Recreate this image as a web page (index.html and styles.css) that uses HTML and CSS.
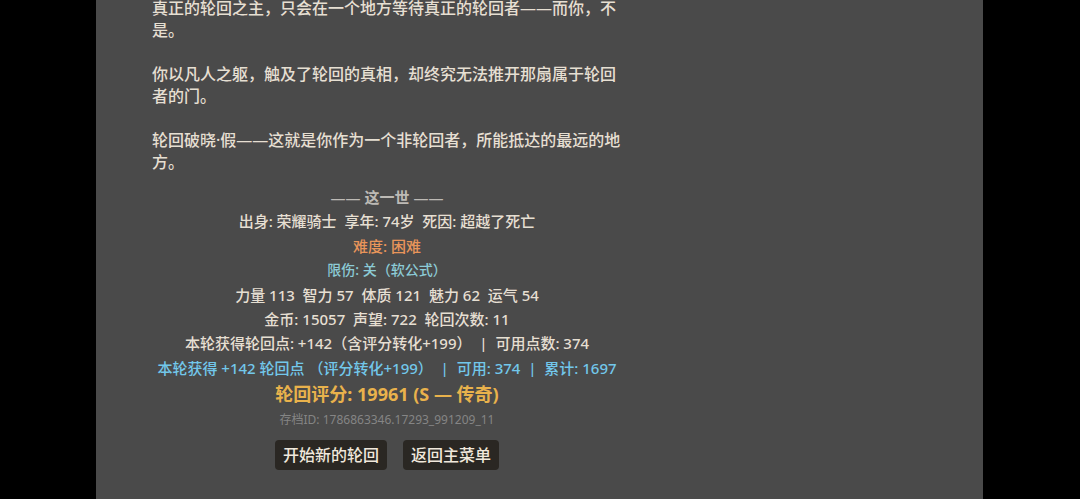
FILE: index.html
```html
<!DOCTYPE html>
<html lang="zh-CN">
<head>
    <meta charset="UTF-8">
    <meta name="viewport" content="width=device-width, initial-scale=1.0">
    <title>轮回 - 结局</title>
    <link rel="stylesheet" href="styles.css">
</head>
<body>

    <div class="screen">
        <div class="ending">
            <div class="story">
                <p>真正的轮回之主，只会在一个地方等待真正的轮回者——而你，不是。</p>
                <p>你以凡人之躯，触及了轮回的真相，却终究无法推开那扇属于轮回者的门。</p>
                <p>轮回破晓·假——这就是你作为一个非轮回者，所能抵达的最远的地方。</p>
            </div>

            <div class="summary">
                <div class="row title">—— 这一世 ——</div>
                <div class="row">出身: 荣耀骑士&nbsp;&nbsp;享年: 74岁&nbsp;&nbsp;死因: 超越了死亡</div>
                <div class="row difficulty">难度: 困难</div>
                <div class="row cap">限伤: 关（软公式）</div>
                <div class="row">力量 113&nbsp;&nbsp;智力 57&nbsp;&nbsp;体质 121&nbsp;&nbsp;魅力 62&nbsp;&nbsp;运气 54</div>
                <div class="row">金币: 15057&nbsp;&nbsp;声望: 722&nbsp;&nbsp;轮回次数: 11</div>
                <div class="row">本轮获得轮回点: +142（含评分转化+199）&nbsp;&nbsp;|&nbsp;&nbsp;可用点数: 374</div>
                <div class="row points">本轮获得 +142 轮回点 （评分转化+199）&nbsp;&nbsp;|&nbsp;&nbsp;可用: 374&nbsp;&nbsp;|&nbsp;&nbsp;累计: 1697</div>
                <div class="score">轮回评分: 19961 (S — 传奇)</div>
                <div class="save-id">存档ID: 1786863346.17293_991209_11</div>
            </div>

            <div class="buttons">
                <button>开始新的轮回</button>
                <button>返回主菜单</button>
            </div>
        </div>
    </div>

</body>
</html>
```

FILE: styles.css
```css
body {
    margin: 0;
    background: #000;
    font-family: "Noto Sans", "Noto Sans CJK SC", sans-serif;
    font-weight: 500;
    color: #e6dfd2;
    overflow: hidden;
}
.screen {
    display: flow-root;
    width: 887px;
    margin-left: 96px;
    min-height: 100vh;
    background: #4a4a4a;
    padding-left: 56px;
    box-sizing: border-box;
}
.ending {
    width: 470px;
    margin-top: -3px;
}
.story p {
    margin: 0 0 22px;
    font-size: 16px;
    line-height: 22px;
}
.story p:last-child {
    margin-bottom: 0;
}
.summary {
    margin-top: 12px;
    text-align: center;
}
.row {
    font-size: 15px;
    line-height: 24.4px;
    white-space: nowrap;
}
.row.title {
    color: #bdbab5;
    font-weight: 600;
}
.row.difficulty {
    color: #e8955a;
}
.row.cap {
    color: #8ccbd6;
    font-size: 14px;
}
.row.points {
    color: #72c7ea;
}
.score {
    font-size: 18px;
    line-height: 28px;
    font-weight: 700;
    color: #e9b24c;
}
.save-id {
    font-size: 12px;
    line-height: 24px;
    font-weight: 400;
    color: #858585;
}
.buttons {
    display: flex;
    justify-content: center;
    gap: 16px;
    margin-top: 8px;
}
button {
    font-family: inherit;
    font-size: 16px;
    font-weight: 500;
    line-height: 22px;
    padding: 4px 8px;
    border: none;
    border-radius: 4px;
    background: #2a2723;
    color: #f0e8dc;
    cursor: pointer;
}
```
